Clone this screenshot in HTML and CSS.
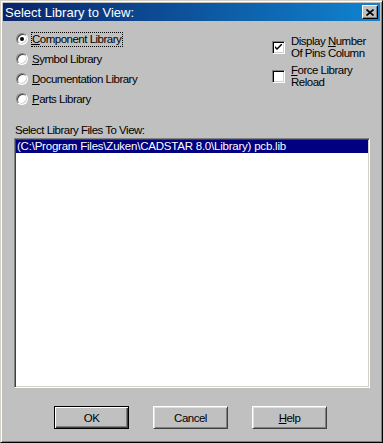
FILE: index.html
```html
<!DOCTYPE html>
<html>
<head>
<meta charset="utf-8">
<link rel="stylesheet" href="styles.css">
</head>
<body>
<div class="window">
  <div class="titlebar">
    <span class="title">Select Library to View:</span>
    <span class="close"><svg width="8" height="7" viewBox="0 0 8 7"><path d="M0.5 0.5 L7.5 6.5 M7.5 0.5 L0.5 6.5" stroke="#000" stroke-width="1.6" fill="none"/></svg></span>
  </div>
  <div class="content">
    <div class="top">
      <div class="radios">
        <div class="radio-row"><span class="radio checked"></span><span class="rlabel focus"><u>C</u>omponent Library</span></div>
        <div class="radio-row"><span class="radio"></span><span class="rlabel"><u>S</u>ymbol Library</span></div>
        <div class="radio-row"><span class="radio"></span><span class="rlabel"><u>D</u>ocumentation Library</span></div>
        <div class="radio-row"><span class="radio"></span><span class="rlabel"><u>P</u>arts Library</span></div>
      </div>
      <div class="checks">
        <div class="check-row"><span class="checkbox"><svg width="7" height="7" viewBox="0 0 7 7"><path d="M0 2 L0 4 L2 6 L7 1 L7 -1 L2 4 Z" fill="#000"/></svg></span><span class="clabel">Display <u>N</u>umber<br>Of Pins Column</span></div>
        <div class="check-row"><span class="checkbox"></span><span class="clabel"><u>F</u>orce Library<br>Reload</span></div>
      </div>
    </div>
    <div class="files-label">Select Library Files To View:</div>
    <div class="listbox">
      <div class="item selected">(C:\Program Files\Zuken\CADSTAR 8.0\Library) pcb.lib</div>
    </div>
    <div class="buttons">
      <button class="btn default">OK</button>
      <button class="btn">Cancel</button>
      <button class="btn"><span><u>H</u>elp</span></button>
    </div>
  </div>
</div>
</body>
</html>
```
FILE: styles.css
```css
html, body {
  margin: 0;
  padding: 0;
  background: #c0c0c0;
}

.window {
  width: 383px;
  height: 443px;
  box-sizing: border-box;
  background: #c0c0c0;
  border: 1px solid;
  border-color: #d4d0c8 #000 #000 #d4d0c8;
  box-shadow: inset 1px 1px #fff, inset -1px -1px #808080;
  padding: 2px;
  display: flex;
  flex-direction: column;
}

.titlebar {
  height: 18px;
  flex: none;
  background: linear-gradient(to right, #0a246a, #1084d0);
  display: flex;
  align-items: center;
  padding: 0 2px;
  color: #fff;
  font: 13px "Liberation Sans", Arial, sans-serif;
}

.close {
  margin-left: auto;
  width: 16px;
  height: 14px;
  box-sizing: border-box;
  background: #c0c0c0;
  border: 1px solid;
  border-color: #fff #000 #000 #fff;
  box-shadow: inset -1px -1px #808080;
  display: flex;
  align-items: center;
  justify-content: center;
}

.close svg {
  display: block;
}

.content {
  flex: 1;
  display: flex;
  flex-direction: column;
  font: 11.5px "Liberation Sans", Arial, sans-serif;
  letter-spacing: -0.5px;
  color: #000;
}

.top {
  display: flex;
  padding: 8px 0 0 13px;
}

.radio-row {
  height: 20px;
  display: flex;
  align-items: center;
}

.radio {
  position: relative;
  width: 12px;
  height: 12px;
  flex: none;
  box-sizing: border-box;
  border-radius: 50%;
  background: #fff;
  border: 1px solid;
  border-color: #808080 #fff #fff #808080;
  box-shadow: inset 1px 1px #404040, inset -1px -1px #d4d0c8;
}

.radio.checked::after {
  content: "";
  position: absolute;
  left: 3px;
  top: 3px;
  width: 4px;
  height: 4px;
  border-radius: 50%;
  background: #000;
}

.rlabel {
  margin-left: 3px;
  border: 1px dotted transparent;
  padding-right: 1px;
  line-height: 13px;
  white-space: nowrap;
}

.rlabel.focus {
  border-color: #000;
}

.checks {
  margin-left: auto;
  width: 108px;
  padding-top: 6px;
  display: flex;
  flex-direction: column;
  gap: 5px;
}

.check-row {
  display: flex;
  align-items: center;
  gap: 6px;
}

.checkbox {
  width: 13px;
  height: 13px;
  flex: none;
  box-sizing: border-box;
  background: #fff;
  border: 1px solid;
  border-color: #808080 #fff #fff #808080;
  box-shadow: inset 1px 1px #000, inset -1px -1px #d4d0c8;
  display: flex;
  align-items: center;
  justify-content: center;
}

.checkbox svg {
  display: block;
}

.clabel {
  line-height: 12px;
  white-space: nowrap;
}

.files-label {
  margin-top: 14px;
  padding-left: 12px;
  line-height: 14px;
}

.listbox {
  margin: 1px 10px 0 11px;
  height: 250px;
  box-sizing: border-box;
  background: #fff;
  border: 1px solid;
  border-color: #808080 #fff #fff #808080;
  box-shadow: inset 1px 1px #404040, inset -1px -1px #d4d0c8;
  padding: 1px;
}

.item {
  height: 13px;
  line-height: 13px;
  padding-left: 1px;
  white-space: nowrap;
  letter-spacing: -0.22px;
}

.item.selected {
  background: #000080;
  color: #fff;
}

.buttons {
  display: flex;
  justify-content: center;
  gap: 24px;
  margin-top: 18px;
  padding-right: 2px;
}

.btn {
  width: 75px;
  height: 23px;
  box-sizing: border-box;
  padding: 0;
  margin: 0;
  background: #c0c0c0;
  border: 1px solid;
  border-color: #fff #404040 #404040 #fff;
  box-shadow: inset 1px 1px #dfdfdf, inset -1px -1px #808080;
  font: inherit;
  letter-spacing: inherit;
  color: #000;
  display: flex;
  align-items: center;
  justify-content: center;
}

.btn.default {
  border-color: #000;
  box-shadow: inset 1px 1px #fff, inset -1px -1px #404040, inset -2px -2px #808080;
}
```
